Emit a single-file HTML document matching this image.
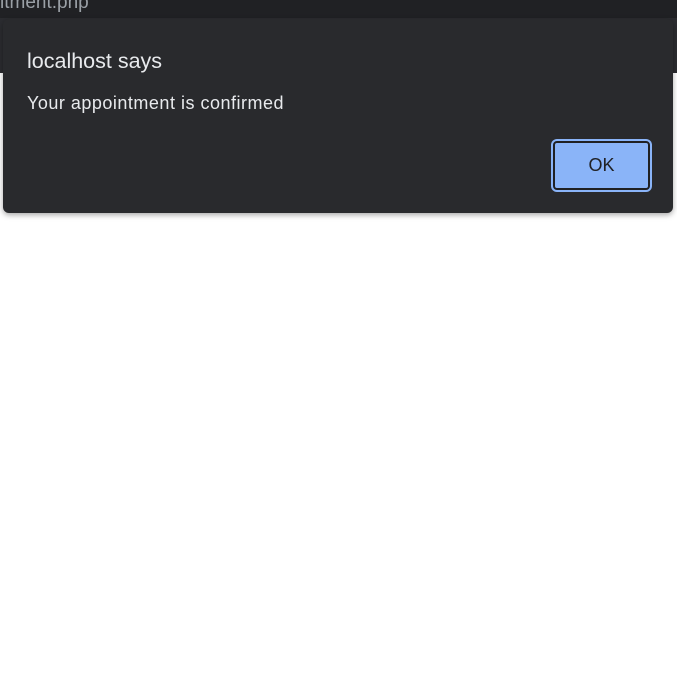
<!DOCTYPE html>
<html><head><style>
html,body{margin:0;padding:0;width:677px;height:676px;background:#fff;overflow:hidden;font-family:"Liberation Sans",sans-serif;position:relative}
.top{position:absolute;left:0;top:0;width:677px;height:18px;background:#202124;color:#9aa0a6;font-size:19px;line-height:6px;overflow:hidden}
.bar{position:absolute;left:0;top:18px;width:677px;height:55px;background:#2b2c30}
.dlg{position:absolute;left:3px;top:19px;width:670px;height:194px;background:#292a2d;border-radius:6px;box-shadow:0 2px 6px rgba(0,0,0,.35)}
.t{position:absolute;left:24px;top:30px;color:#e8eaed;font-size:21.5px}
.m{position:absolute;left:24px;top:74px;color:#e8eaed;font-size:18px;letter-spacing:0.5px}
.ok{position:absolute;left:550px;top:122px;width:93px;height:45px;background:#8ab4f8;border:2px solid #202124;border-radius:4px;box-shadow:0 0 0 2px #8ab4f8;color:#202124;font-size:18px;text-align:center;line-height:45px}
</style></head><body>
<div class="top">itment.php</div>
<div class="bar"></div>
<div class="dlg">
<div class="t">localhost says</div>
<div class="m">Your appointment is confirmed</div>
<div class="ok">OK</div>
</div>
</body></html>
